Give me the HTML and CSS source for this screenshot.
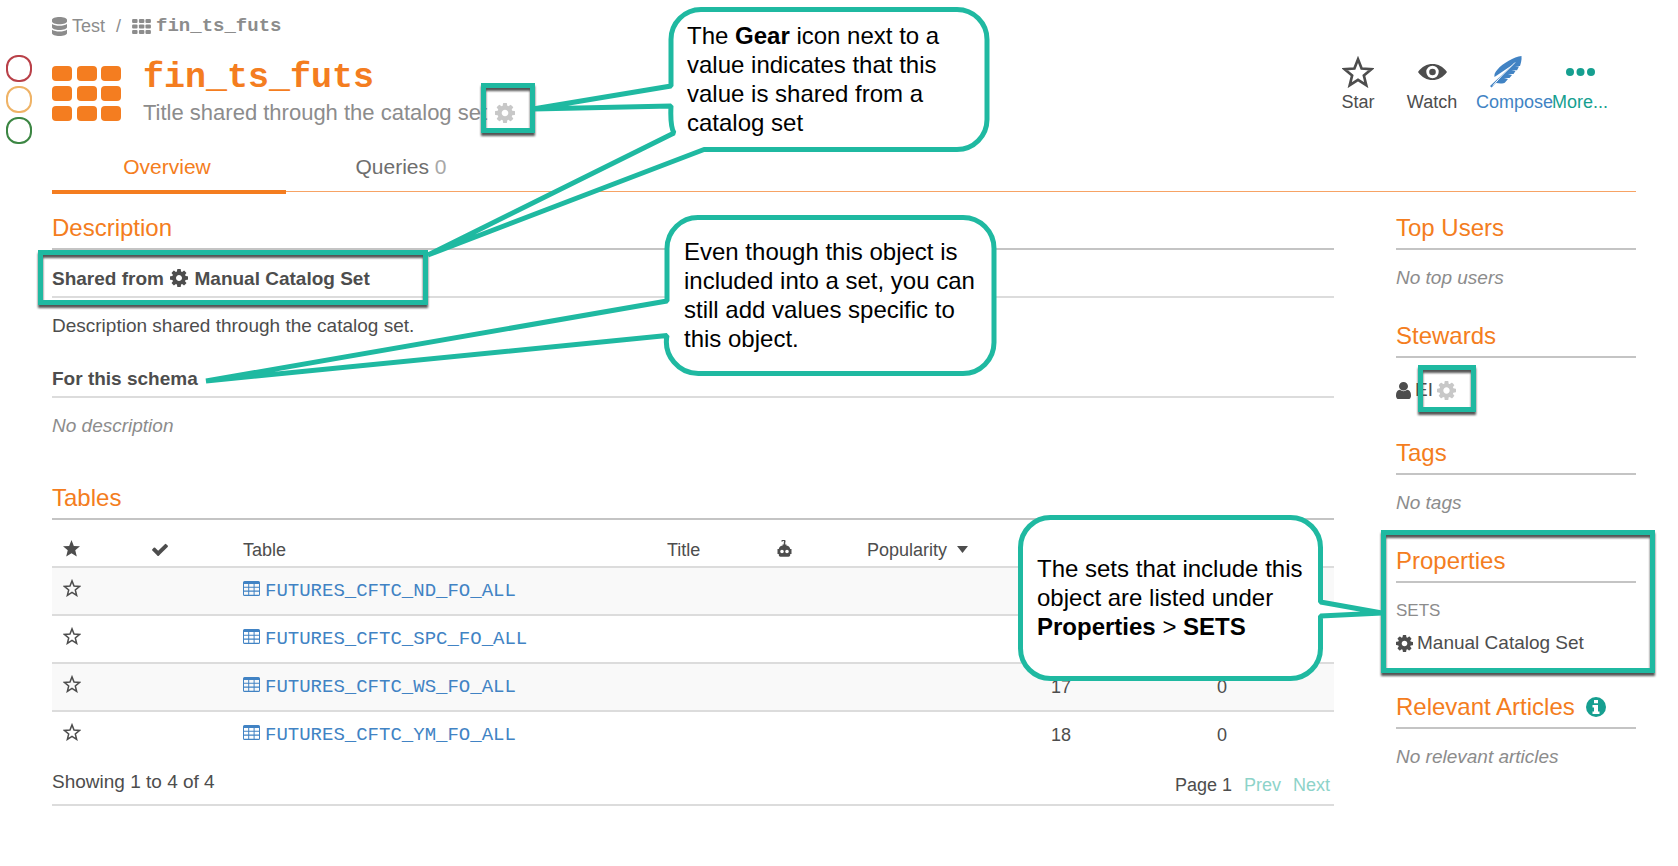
FILE: index.html
```html
<!DOCTYPE html>
<html lang="en">
<head>
<meta charset="utf-8">
<meta name="viewport" content="width=device-width, initial-scale=1">
<title>fin_ts_futs</title>
<link rel="stylesheet" href="styles.css">
</head>
<body>
<svg class="sprite" aria-hidden="true">
  <symbol id="gear" viewBox="128 128 1536 1536"><path d="M1152 896q0-106-75-181t-181-75-181 75-75 181 75 181 181 75 181-75 75-181zm512-109v222q0 12-8 23t-20 13l-185 28q-19 54-39 91 35 50 107 138 10 12 10 25t-9 23q-27 37-99 108t-94 71q-12 0-26-9l-138-108q-44 23-91 38-16 136-29 186-7 28-36 28h-222q-14 0-24.500-8.500t-11.500-21.500l-28-184q-49-16-90-37l-141 107q-10 9-25 9-14 0-25-11-126-114-165-168-7-10-7-23 0-12 8-23 15-21 51-66.500t54-70.500q-27-50-41-99l-183-27q-13-2-21-12.500t-8-23.500v-222q0-12 8-23t19-13l186-28q14-46 39-92-40-57-107-138-10-12-10-24 0-10 9-23 26-36 98.500-107.500t94.500-71.500q13 0 26 10l138 107q44-23 91-38 16-136 29-186 7-28 36-28h222q14 0 24.500 8.500t11.500 21.500l28 184q49 16 90 37l142-107q9-9 24-9 13 0 25 10 129 119 165 170 7 8 7 22 0 12-8 23-15 21-51 66.500t-54 70.500q26 50 41 98l183 28q13 2 21 12.500t8 23.500z"/></symbol>
  <symbol id="star" viewBox="0 0 24 24"><path d="M12 0l3.300 8.300 8.700.5-6.700 5.600 2.200 8.900L12 18.600l-7.500 4.700 2.200-8.900L0 8.800l8.700-.5z"/></symbol>
  <symbol id="star-line" viewBox="0 0 24 24"><path d="M12 2.500l2.700 6.900 7.300.5-5.600 4.700 1.800 7.300L12 17.900l-6.200 4 1.800-7.300L2 9.900l7.300-.5z" fill="none" stroke="currentColor" stroke-width="2"/></symbol>
  <symbol id="grid" viewBox="0 0 69 55"><rect width="20" height="15" rx="4"/><rect x="25" width="20" height="15" rx="4"/><rect x="49" width="20" height="15" rx="4"/><rect y="20" width="20" height="15" rx="4"/><rect x="25" y="20" width="20" height="15" rx="4"/><rect x="49" y="20" width="20" height="15" rx="4"/><rect y="40" width="20" height="15" rx="4"/><rect x="25" y="40" width="20" height="15" rx="4"/><rect x="49" y="40" width="20" height="15" rx="4"/></symbol>
  <symbol id="table" viewBox="0 0 17 15"><path fill-rule="evenodd" d="M1.500 0h14A1.500 1.500 0 0 1 17 1.500v12a1.500 1.500 0 0 1-1.500 1.500h-14A1.500 1.500 0 0 1 0 13.500v-12A1.500 1.500 0 0 1 1.500 0zM1 3v2.700h4.200V3zm5.200 0v2.700h4.400V3zm5.400 0v2.700H16V3zM1 6.800v2.700h4.200V6.800zm5.200 0v2.700h4.400V6.800zm5.400 0v2.700H16V6.800zM1 10.700v3h4.200v-3zm5.200 0v3h4.400v-3zm5.400 0v3H16v-3z"/></symbol>
</svg>

<div class="page">
  <div class="flags">
    <button class="flag flag-red" type="button" aria-label="Deprecate"></button>
    <button class="flag flag-amber" type="button" aria-label="Warn"></button>
    <button class="flag flag-green" type="button" aria-label="Endorse"></button>
  </div>

  <div class="content">
    <nav class="crumbs" aria-label="Breadcrumb">
      <a href="#test"><svg width="15" height="19" viewBox="0 0 15 19"><path d="M0 2.800C0 1.200 3.400 0 7.500 0S15 1.200 15 2.800v1.700c0 1.600-3.400 2.800-7.500 2.800S0 6.100 0 4.500zM0 7c1.600 1.200 4.500 1.800 7.500 1.800S13.400 8.200 15 7v3.200c0 1.600-3.400 2.800-7.500 2.800S0 11.800 0 10.200zM0 12.700c1.600 1.200 4.500 1.800 7.500 1.800s5.900-.6 7.500-1.800v3.500c0 1.600-3.400 2.800-7.500 2.800S0 17.800 0 16.200z"/></svg>Test</a>
      <span class="slash">/</span>
      <a class="mono" href="#schema"><svg width="19" height="15" viewBox="0 0 69 55"><use href="#grid"/></svg>fin_ts_futs</a>
    </nav>

    <header class="head">
      <svg class="head-icon" width="69" height="55"><use href="#grid"/></svg>
      <div class="head-text">
        <h1>fin_ts_futs</h1>
        <p class="subtitle">Title shared through the catalog set<svg width="20" height="20"><use href="#gear"/></svg></p>
      </div>
      <div class="actions">
        <button type="button"><span class="glyph"><svg width="32" height="32"><use href="#star-line"/></svg></span>Star</button>
        <button type="button"><span class="glyph"><svg width="29" height="16" viewBox="0 0 29 16"><path fill-rule="evenodd" d="M0 8C4 2.500 9 0 14.500 0S25 2.500 29 8c-4 5.500-9 8-14.500 8S4 13.500 0 8zm14.500-6.200a6.200 6.200 0 1 0 0 12.400 6.200 6.200 0 0 0 0-12.400zm0 2.900a3.300 3.300 0 1 1 0 6.600 3.300 3.300 0 0 1 0-6.600z"/></svg></span>Watch</button>
        <button class="blue" type="button"><span class="glyph"><svg width="32" height="32" viewBox="0 0 32 32"><path d="M31.500 0C24 1 13 7 7.500 13.500 5 16.500 4 18 4.500 21L23 8.500 7 23.500 0 30l1.500 1.500L6 27c4 .8 8 .5 9-.5l3-3.500-4-1h5.500l2.500-3-4-1h5.500l2-3-4-.8h5.500l2-3.700-4-.5h5C30.500 8 32 4 31.500 0z"/><path d="M3 29.500L11.500 20 25 6.500" fill="none" stroke="#fff" stroke-width="1"/></svg></span>Compose</button>
        <button class="teal" type="button"><span class="glyph"><svg width="29" height="8" viewBox="0 0 29 8"><circle cx="4" cy="4" r="4"/><circle cx="14.500" cy="4" r="4"/><circle cx="25" cy="4" r="4"/></svg></span>More...</button>
      </div>
    </header>

    <nav class="tabs" aria-label="Sections">
      <a class="tab active" href="#overview">Overview</a>
      <a class="tab" href="#queries">Queries <span class="count">0</span></a>
    </nav>

    <div class="columns">
      <main>
        <section>
          <h2>Description</h2>
          <h3>Shared from <svg width="18" height="18"><use href="#gear"/></svg> Manual Catalog Set</h3>
          <p>Description shared through the catalog set.</p>
          <h3 class="next">For this schema</h3>
          <p class="empty">No description</p>
        </section>
        <section class="tables">
          <h2>Tables</h2>
          <table>
            <colgroup><col class="c-star"><col class="c-check"><col><col class="c-title"><col class="c-bot"><col class="c-pop"><col class="c-num"><col class="c-last"></colgroup>
            <thead>
              <tr>
                <th><svg class="raise" width="17" height="17" aria-label="Starred"><use href="#star"/></svg></th>
                <th><svg width="16" height="13" viewBox="120 250 1552 1272" aria-label="Endorsed"><path d="M1671 566q0 40-28 68l-724 724-136 136q-28 28-68 28t-68-28l-136-136-362-362q-28-28-28-68t28-68l136-136q28-28 68-28t68 28l294 295 656-657q28-28 68-28t68 28l136 136q28 28 28 68z"/></svg></th>
                <th>Table</th>
                <th>Title</th>
                <th><svg class="raise" width="15" height="17" viewBox="0 0 15 17" aria-label="Suggested"><path d="M5 1.500C5 .5 6 0 6.800.2c1 .2 1.200 1.100.8 1.800L7.400 5" fill="none" stroke="currentColor" stroke-width="1.500"/><path fill-rule="evenodd" d="M5.500 4.500h4v1.300h1c1.500.4 2.500 1.700 2.700 3.200h1.300v5h-1.300v1c0 1-.7 1.700-1.700 1.700h-8c-1 0-1.700-.7-1.700-1.700v-1H.5V9h1.300C2 7.500 3 6.200 4.500 5.800h1zM5 9.700a1.800 1.800 0 1 0 0 3.600 1.800 1.800 0 0 0 0-3.600zm5 0a1.800 1.800 0 1 0 0 3.600 1.800 1.800 0 0 0 0-3.600z"/></svg></th>
                <th>Popularity <svg class="caret" width="11" height="7" viewBox="0 0 11 7"><path d="M0 0h11L5.500 7z"/></svg></th>
                <th></th>
                <th></th>
              </tr>
            </thead>
            <tbody>
              <tr><td><button class="fav" type="button" aria-label="Star table"><svg width="18" height="18"><use href="#star-line"/></svg></button></td><td></td><td><a class="tbl" href="#nd"><svg width="17" height="15"><use href="#table"/></svg>FUTURES_CFTC_ND_FO_ALL</a></td><td></td><td></td><td></td><td></td><td></td></tr>
              <tr><td><button class="fav" type="button" aria-label="Star table"><svg width="18" height="18"><use href="#star-line"/></svg></button></td><td></td><td><a class="tbl" href="#spc"><svg width="17" height="15"><use href="#table"/></svg>FUTURES_CFTC_SPC_FO_ALL</a></td><td></td><td></td><td></td><td></td><td></td></tr>
              <tr><td><button class="fav" type="button" aria-label="Star table"><svg width="18" height="18"><use href="#star-line"/></svg></button></td><td></td><td><a class="tbl" href="#ws"><svg width="17" height="15"><use href="#table"/></svg>FUTURES_CFTC_WS_FO_ALL</a></td><td></td><td></td><td></td><td class="num">17</td><td class="num">0</td></tr>
              <tr><td><button class="fav" type="button" aria-label="Star table"><svg width="18" height="18"><use href="#star-line"/></svg></button></td><td></td><td><a class="tbl" href="#ym"><svg width="17" height="15"><use href="#table"/></svg>FUTURES_CFTC_YM_FO_ALL</a></td><td></td><td></td><td></td><td class="num">18</td><td class="num">0</td></tr>
            </tbody>
          </table>
          <div class="table-foot">
            <span>Showing 1 to 4 of 4</span>
            <div class="pager"><span>Page 1</span><a href="#prev">Prev</a><a href="#next">Next</a></div>
          </div>
        </section>
      </main>

      <aside>
        <section>
          <h2>Top Users</h2>
          <p class="empty">No top users</p>
        </section>
        <section>
          <h2>Stewards</h2>
          <p class="steward"><svg width="15" height="17" viewBox="256 128 1280 1536" preserveAspectRatio="none"><path d="M1536 1399q0 109-62.500 187t-150.500 78h-854q-88 0-150.500-78t-62.500-187q0-85 8.500-160.500t31.500-152 58.500-131 94-89 134.500-34.500q131 128 313 128t313-128q76 0 134.500 34.500t94 89 58.500 131 31.500 152 8.500 160.500zm-256-887q0 159-112.500 271.500t-271.500 112.500-271.500-112.500-112.500-271.500 112.500-271.500 271.500-112.500 271.500 112.500 112.500 271.500z"/></svg><a href="#steward">EI</a><svg class="pale" width="19" height="19"><use href="#gear"/></svg></p>
        </section>
        <section>
          <h2>Tags</h2>
          <p class="empty">No tags</p>
        </section>
        <section>
          <h2>Properties</h2>
          <p class="label">SETS</p>
          <a class="set" href="#set"><svg width="17" height="17"><use href="#gear"/></svg>Manual Catalog Set</a>
        </section>
        <section>
          <h2>Relevant Articles <svg class="info" width="20" height="20" viewBox="0 0 20 20"><circle cx="10" cy="10" r="10"/><path fill="#fff" d="M8 3h4v3.300H8zM6.500 8H12v6.500h1.500V17h-7v-2.500H8v-4H6.500z"/></svg></h2>
          <p class="empty">No relevant articles</p>
        </section>
      </aside>
    </div>
  </div>
</div>

<div class="notes">
  <div class="frame frame-title"></div>
  <div class="frame frame-shared"></div>
  <div class="frame frame-steward"></div>
  <div class="frame frame-props"></div>
  <svg class="bubbles">
    <path d="M701 9.500H957a30 30 0 0 1 30 30V119.500a30 30 0 0 1-30 30H704L428 255 674 133Q670 126 671 106L533 109 671 86V39.500a30 30 0 0 1 30-30z"/>
    <path d="M699 217.500H963a31 31 0 0 1 31 31V342.500a31 31 0 0 1-31 31H699a32 32 0 0 1-32-38L206 381 667 301V248.500a31 31 0 0 1 32-31z"/>
    <path d="M1051 517.500H1290a30 30 0 0 1 30.500 30V602L1382 613 1320.500 616V648.500a30 30 0 0 1-30.500 30H1051a30 30 0 0 1-30.500-30V547.500a30 30 0 0 1 30.500-30z"/>
  </svg>
  <p class="note note-gear">The <b>Gear</b> icon next to a value indicates that this value is shared from a catalog set</p>
  <p class="note note-object">Even though this object is included into a set, you can still add values specific to this object.</p>
  <p class="note note-sets">The sets that include this object are listed under <b>Properties</b> &gt; <b>SETS</b></p>
</div>
</body>
</html>
```

FILE: styles.css
```css
:root {
  --orange: #f47d20;
  --teal: #1fb9a1;
  --link: #4183c4;
  --text: #4d4d4d;
  --muted: #8c8c8c;
}

* { box-sizing: border-box; }

body {
  margin: 0;
  position: relative;
  background: #fff;
  color: var(--text);
  font: 19px/24px "Liberation Sans", Arial, sans-serif;
}

h1, h2, h3, p { margin: 0; }
a { color: inherit; text-decoration: none; }
svg { fill: currentColor; flex: none; }
button { font: inherit; color: inherit; background: none; border: 0; padding: 0; cursor: pointer; }
.sprite { position: absolute; width: 0; height: 0; }

.page { display: flex; padding: 14px 42px 24px 6px; }
.content { flex: 1; min-width: 0; }

/* Trust flags in the left gutter */
.flags { display: flex; flex-direction: column; gap: 4px; width: 46px; padding-top: 41px; }
.flag { width: 26px; height: 27px; border: 2px solid; border-radius: 12px; }
.flag-red { color: #b94048; }
.flag-amber { color: #efb366; }
.flag-green { color: #3c8643; }

.crumbs { display: flex; align-items: center; gap: 11px; font-size: 18px; color: var(--muted); }
.crumbs a { display: flex; align-items: center; gap: 5px; }
.crumbs .mono { font: bold 19px/24px "Liberation Mono", "Courier New", monospace; }

.head { display: flex; align-items: flex-start; margin-top: 18px; }
.head-icon { margin: 10px 22px 0 0; color: var(--orange); }
.head-text { flex: 1; }
h1 { color: var(--orange); font: bold 35px/44px "Liberation Mono", "Courier New", monospace; }
.subtitle { display: flex; align-items: center; gap: 8px; color: var(--muted); font-size: 22px; line-height: 26px; }
.subtitle svg, .pale { color: #c8c8c8; }

.actions { display: flex; gap: 14px; padding-right: 26px; font-size: 18px; }
.actions button { display: flex; flex-direction: column; width: 60px; align-items: safe center; line-height: 24px; white-space: nowrap; }
.glyph { display: flex; align-items: center; justify-content: center; width: 60px; height: 32px; margin-bottom: 2px; }
.blue { color: var(--link); }
.teal { color: #169f90; }

.tabs { display: flex; margin-top: 29px; border-bottom: 1px solid #f7a365; font-size: 21px; }
.tab { width: 234px; padding: 0 4px 11px 0; text-align: center; color: #6e6e6e; }
.tab.active { margin-bottom: -3px; border-bottom: 4px solid var(--orange); color: var(--orange); }
.count { color: #a8a8a8; }

.columns { display: flex; gap: 62px; padding-top: 21px; }
main { flex: 1; min-width: 0; }
aside { width: 240px; display: flex; flex-direction: column; gap: 31px; }

h2 { padding-bottom: 5px; border-bottom: 2px solid #c4c4c4; color: var(--orange); font-size: 24px; font-weight: normal; line-height: 30px; white-space: nowrap; }
h3 { margin-top: 17px; padding-bottom: 5px; border-bottom: 2px solid #dcdcdc; font-size: 19px; line-height: 24px; }
h3 svg { vertical-align: -2px; margin: 0 1px; }
h3.next { margin-top: 29px; }
h2 + p, h3 + p { margin-top: 16px; }
.empty { color: var(--muted); font-style: italic; }

.tables { margin-top: 45px; }
table { width: 100%; table-layout: fixed; border-collapse: separate; border-spacing: 0; font-size: 18px; }
th, td { vertical-align: top; padding: 11px 0 11px 11px; border-bottom: 2px solid #dcdcdc; text-align: left; font-weight: normal; line-height: 24px; }
th { padding: 18px 0 4px 11px; height: 48px; }
td { height: 48px; }
tbody tr:nth-child(odd) { background: #f9f9f9; }
tbody tr:last-child td { border-bottom: 0; height: 46px; }
.c-star { width: 89px; }
.c-check { width: 91px; }
.c-title { width: 110px; }
.c-bot { width: 90px; }
.c-pop { width: 156px; }
.c-num { width: 98px; }
.c-last { width: 224px; }
.raise { vertical-align: -1px; }
.caret { vertical-align: 3px; margin-left: 5px; }
td.num { padding-left: 0; text-align: center; }
.fav { display: flex; height: 24px; align-items: flex-start; }
.tbl { display: flex; align-items: center; gap: 5px; color: var(--link); font: 19px/24px "Liberation Mono", "Courier New", monospace; }
.tbl svg { margin-bottom: 6px; }

.table-foot { display: flex; justify-content: space-between; align-items: flex-start; padding: 12px 4px 4px 0; border-bottom: 2px solid #dcdcdc; }
.pager { display: flex; gap: 12px; font-size: 18px; line-height: 30px; }
.pager a { color: #8dd3c9; }

.steward { display: flex; align-items: center; gap: 4px; height: 34px; }
h2 + .steward { margin-top: 15px; }
.label { color: var(--muted); font-size: 17px; }
.set { display: flex; align-items: center; gap: 4px; margin-top: 8px; padding-bottom: 6px; }
.info { color: #169f90; vertical-align: -2px; margin-left: 5px; }

/* Annotation layer drawn over the page */
.notes { position: absolute; inset: 0; pointer-events: none; color: #000; }
.bubbles { position: absolute; inset: 0; width: 100%; height: 100%; overflow: visible; fill: #fff; stroke: var(--teal); stroke-width: 5; stroke-linejoin: bevel; }
.frame { position: absolute; border: 5px solid var(--teal); filter: drop-shadow(0 3px 1px #555); }
.frame-title { left: 481px; top: 83px; width: 54px; height: 50px; }
.frame-shared { left: 38px; top: 250px; width: 390px; height: 55px; }
.frame-steward { left: 1418px; top: 365px; width: 58px; height: 47px; }
.frame-props { left: 1381px; top: 530px; width: 274px; height: 143px; }
.note { position: absolute; font-size: 24px; line-height: 29px; }
.note-gear { left: 687px; top: 21px; width: 270px; }
.note-object { left: 684px; top: 237px; width: 300px; }
.note-sets { left: 1037px; top: 554px; width: 276px; }
```
